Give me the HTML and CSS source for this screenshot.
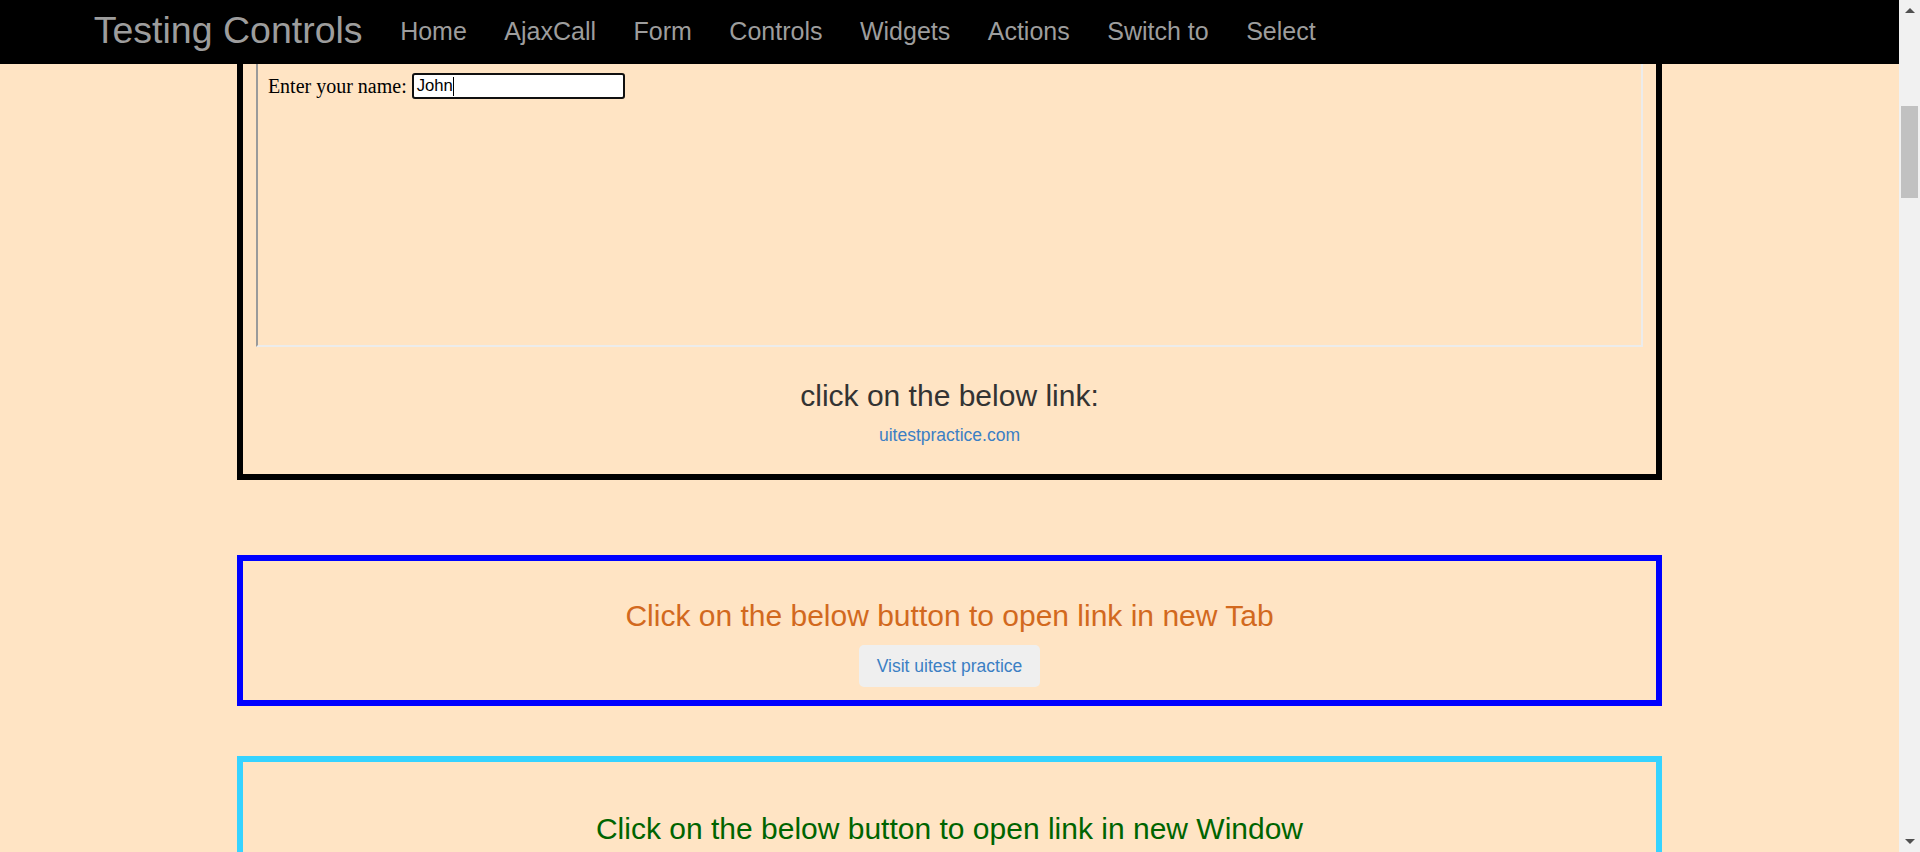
FILE: index.html
```html
<!DOCTYPE html>
<html lang="en">
<head>
<meta charset="utf-8">
<title>Testing Controls - Switch to</title>
<link rel="stylesheet" href="styles.css">
</head>
<body>
<div class="app">
  <div class="page">
    <nav class="navbar">
      <a class="brand" href="#">Testing Controls</a>
      <a class="nav-link" href="#">Home</a>
      <a class="nav-link" href="#">AjaxCall</a>
      <a class="nav-link" href="#">Form</a>
      <a class="nav-link" href="#">Controls</a>
      <a class="nav-link" href="#">Widgets</a>
      <a class="nav-link" href="#">Actions</a>
      <a class="nav-link" href="#">Switch to</a>
      <a class="nav-link" href="#">Select</a>
    </nav>
    <main class="content">
      <section class="panel panel-black">
        <div class="frame">
          <div class="frame-body">
            <span class="frame-label">Enter your name:</span>
            <span class="fake-input">John<span class="caret"></span></span>
          </div>
        </div>
        <h3 class="heading heading-dark">click on the below link:</h3>
        <p class="link-line"><a class="site-link" href="#">uitestpractice.com</a></p>
      </section>
      <section class="panel panel-blue">
        <h3 class="heading heading-orange">Click on the below button to open link in new Tab</h3>
        <button class="btn" type="button">Visit uitest practice</button>
      </section>
      <section class="panel panel-cyan">
        <h3 class="heading heading-green">Click on the below button to open link in new Window</h3>
      </section>
    </main>
  </div>
  <div class="scrollbar">
    <div class="sb-btn"><span class="arrow-up"></span></div>
    <div class="sb-track"><div class="sb-thumb"></div></div>
    <div class="sb-btn"><span class="arrow-down"></span></div>
  </div>
</div>
</body>
</html>
```
FILE: styles.css
```css
html, body {
  margin: 0;
  padding: 0;
  height: 100%;
}

body {
  background: #ffe4c4;
  font-family: "Liberation Sans", Arial, sans-serif;
  color: #333;
  overflow: hidden;
}

.app {
  display: flex;
  height: 852px;
  overflow: hidden;
}

.page {
  flex: 1;
  min-width: 0;
  position: relative;
  overflow: hidden;
}

/* navbar (fixed on top of the scrolled content) */
.navbar {
  position: absolute;
  top: 0;
  left: 0;
  right: 0;
  height: 64px;
  background: #000;
  display: flex;
  align-items: flex-start;
  padding-left: 75px;
  z-index: 10;
}

.brand {
  font-size: 37.5px;
  line-height: 40px;
  padding: 10px 18.75px 0;
  color: #9d9d9d;
  text-decoration: none;
}

.nav-link {
  font-size: 25px;
  line-height: 25px;
  padding: 19px 18.75px 0;
  color: #9d9d9d;
  text-decoration: none;
}

/* content */
.content {
  padding-top: 42px;
}

.panel {
  width: 75%;
  margin: 0 auto;
  box-sizing: border-box;
  border: 6px solid #000;
  text-align: center;
}

.panel-black {
  border-color: #000;
  padding: 13px 12.5px 26px;
}

.panel-blue {
  border-color: #0000ff;
  margin-top: 75px;
  padding: 38px 12.5px 13px;
}

.panel-cyan {
  border-color: #36d3ff;
  margin-top: 50px;
  padding: 50px 12.5px 20px;
}

.frame {
  height: 282px;
  border-style: solid;
  border-width: 2px;
  border-color: #9a9a9a #ececec #ececec #9a9a9a;
  text-align: left;
}

.frame-body {
  padding: 10px;
  display: flex;
  align-items: center;
  font-family: "Liberation Serif", "Times New Roman", serif;
  font-size: 20px;
  color: #000;
}

.fake-input {
  display: inline-flex;
  align-items: center;
  box-sizing: border-box;
  width: 213px;
  height: 26px;
  margin-left: 5px;
  padding: 0 3px;
  border: 2px solid #101010;
  border-radius: 3px;
  background: #fff;
  font-family: "Liberation Sans", Arial, sans-serif;
  font-size: 16.67px;
  color: #000;
}

.caret {
  display: inline-block;
  width: 1px;
  height: 19px;
  background: #000;
}

.heading {
  margin: 0;
  font-size: 30px;
  line-height: 33px;
  font-weight: 400;
}

.panel-black .heading {
  margin-top: 32px;
}

.heading-dark { color: #333; }
.heading-orange { color: #d2691e; }
.heading-green { color: #006400; }

.link-line {
  margin: 11px 0 0;
  font-size: 17.5px;
  line-height: 25px;
}

.site-link {
  color: #3b7fc4;
  text-decoration: none;
}

.btn {
  display: block;
  margin: 13px auto 0;
  height: 42px;
  padding: 0 16.5px;
  border: 1px solid transparent;
  border-radius: 5px;
  background: #efefef;
  color: #3b7fc4;
  font-family: "Liberation Sans", Arial, sans-serif;
  font-size: 17.5px;
  line-height: 40px;
}

/* drawn scrollbar */
.scrollbar {
  width: 21px;
  flex: none;
  background: #f1f1f1;
  display: flex;
  flex-direction: column;
}

.sb-btn {
  height: 21px;
  flex: none;
  display: flex;
  align-items: center;
  justify-content: center;
}

.arrow-up {
  width: 0;
  height: 0;
  border-left: 5px solid transparent;
  border-right: 5px solid transparent;
  border-bottom: 5px solid #505050;
}

.arrow-down {
  width: 0;
  height: 0;
  border-left: 5px solid transparent;
  border-right: 5px solid transparent;
  border-top: 5px solid #505050;
}

.sb-track {
  flex: 1;
  display: flex;
  flex-direction: column;
}

.sb-thumb {
  margin: 85px 2px 0;
  height: 92px;
  background: #c1c1c1;
}
```
